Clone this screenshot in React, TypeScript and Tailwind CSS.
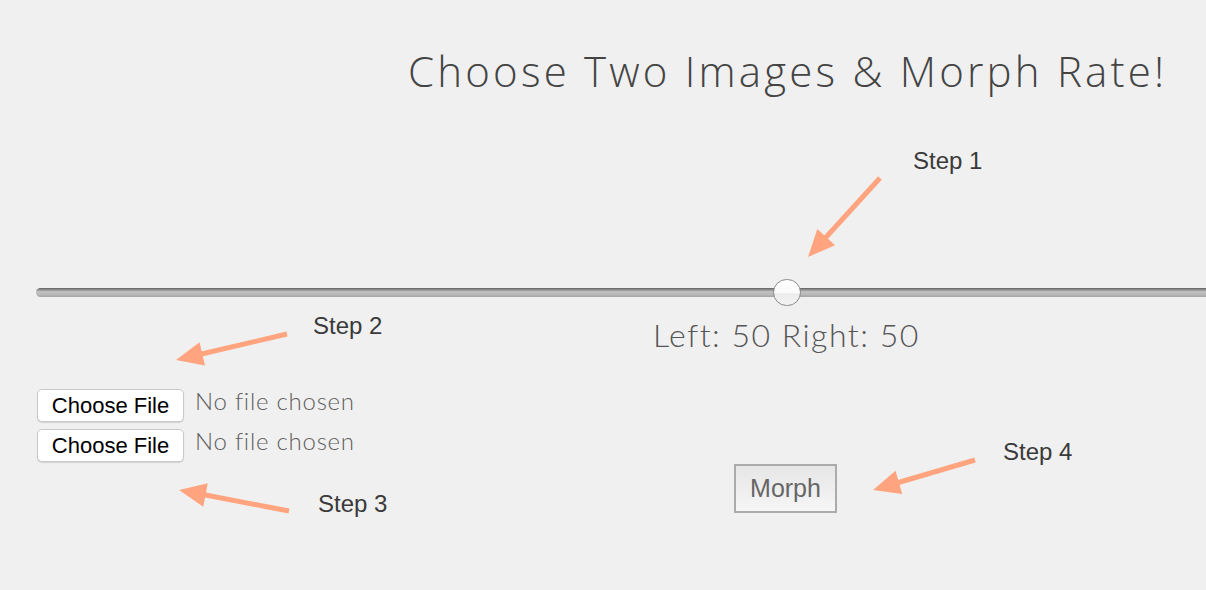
import React from "react";

type Arrow = { x1: number; y1: number; x2: number; y2: number };

const arrows: Arrow[] = [
  { x1: 880, y1: 178, x2: 808, y2: 257 },
  { x1: 287, y1: 334, x2: 176, y2: 360 },
  { x1: 289, y1: 511, x2: 179, y2: 490 },
  { x1: 975, y1: 460, x2: 873, y2: 490 },
];

function ArrowShape({ a }: { a: Arrow }) {
  const dx = a.x2 - a.x1;
  const dy = a.y2 - a.y1;
  const len = Math.hypot(dx, dy);
  const ux = dx / len;
  const uy = dy / len;
  const headLen = 27;
  const half = 12;
  const bx = a.x2 - ux * headLen;
  const by = a.y2 - uy * headLen;
  const px = -uy;
  const py = ux;
  const pts = `${a.x2},${a.y2} ${bx + px * half},${by + py * half} ${bx - px * half},${by - py * half}`;
  return (
    <g>
      <line x1={a.x1} y1={a.y1} x2={bx + ux * 4} y2={by + uy * 4} stroke="#ffa47f" strokeWidth={5} />
      <polygon points={pts} fill="#ffa47f" />
    </g>
  );
}

function FileRow() {
  return (
    <div className="flex items-start">
      <button className="h-[33px] w-[147px] rounded-[5px] border border-[#c9c9c9] bg-white text-[22px] leading-none text-black shadow-[0_1px_1px_rgba(0,0,0,0.12)] font-['Liberation_Sans',Arial,sans-serif]">
        Choose File
      </button>
      <span className="ml-[11px] text-[24px] leading-[24px] font-light tracking-[0.75px] text-[#5e5e5e] font-['Lato',sans-serif]">
        No file chosen
      </span>
    </div>
  );
}

export default function App() {
  return (
    <div className="relative h-[590px] w-full overflow-hidden bg-[#f0f0f0]">
      <div className="flex flex-col">
        <h1 className="ml-[408px] mt-[41px] h-[60px] whitespace-nowrap text-[42px] leading-[60px] font-light tracking-[3.2px] text-[#444] font-['Open_Sans',sans-serif]">
          Choose Two Images &amp; Morph Rate!
        </h1>

        <div className="relative ml-[36px] mt-[187px] h-[9px] w-[1200px] rounded-l-full bg-[linear-gradient(to_bottom,#626262_0%,#8a8a8a_18%,#c2c2c2_42%,#bababa_70%,#a3a3a3_100%)]">
          <div className="absolute left-[737px] top-[-9px] h-[27px] w-[28px] rounded-full border-[1.5px] border-[#8a8a8a] bg-[linear-gradient(to_bottom,#ffffff_0%,#fafafa_50%,#ececec_55%,#f3f3f3_100%)]" />
        </div>

        <div className="ml-[653px] mt-[18px] h-[40px] whitespace-nowrap text-[32px] leading-[40px] font-light tracking-[1.5px] text-[#555] font-['Lato',sans-serif]">
          Left: 50 Right: 50
        </div>

        <div className="ml-[37px] mt-[34px] flex flex-col gap-[7px]">
          <FileRow />
          <FileRow />
        </div>

        <button className="ml-[734px] mt-[2px] h-[49px] w-[103px] border-2 border-[#ababab] bg-[linear-gradient(to_bottom,#e6e6e6,#f6f6f6)] text-[25px] leading-none text-[#666] font-['Liberation_Sans',Arial,sans-serif]">
          Morph
        </button>
      </div>

      <svg className="pointer-events-none absolute left-0 top-0" width={1206} height={590}>
        {arrows.map((a, i) => (
          <ArrowShape key={i} a={a} />
        ))}
      </svg>

      <span className="absolute left-[913px] top-[149px] text-[24px] leading-none text-[#3a3a3a] font-['Liberation_Sans',Arial,sans-serif]">Step 1</span>
      <span className="absolute left-[313px] top-[314px] text-[24px] leading-none text-[#3a3a3a] font-['Liberation_Sans',Arial,sans-serif]">Step 2</span>
      <span className="absolute left-[318px] top-[492px] text-[24px] leading-none text-[#3a3a3a] font-['Liberation_Sans',Arial,sans-serif]">Step 3</span>
      <span className="absolute left-[1003px] top-[440px] text-[24px] leading-none text-[#3a3a3a] font-['Liberation_Sans',Arial,sans-serif]">Step 4</span>
    </div>
  );
}
